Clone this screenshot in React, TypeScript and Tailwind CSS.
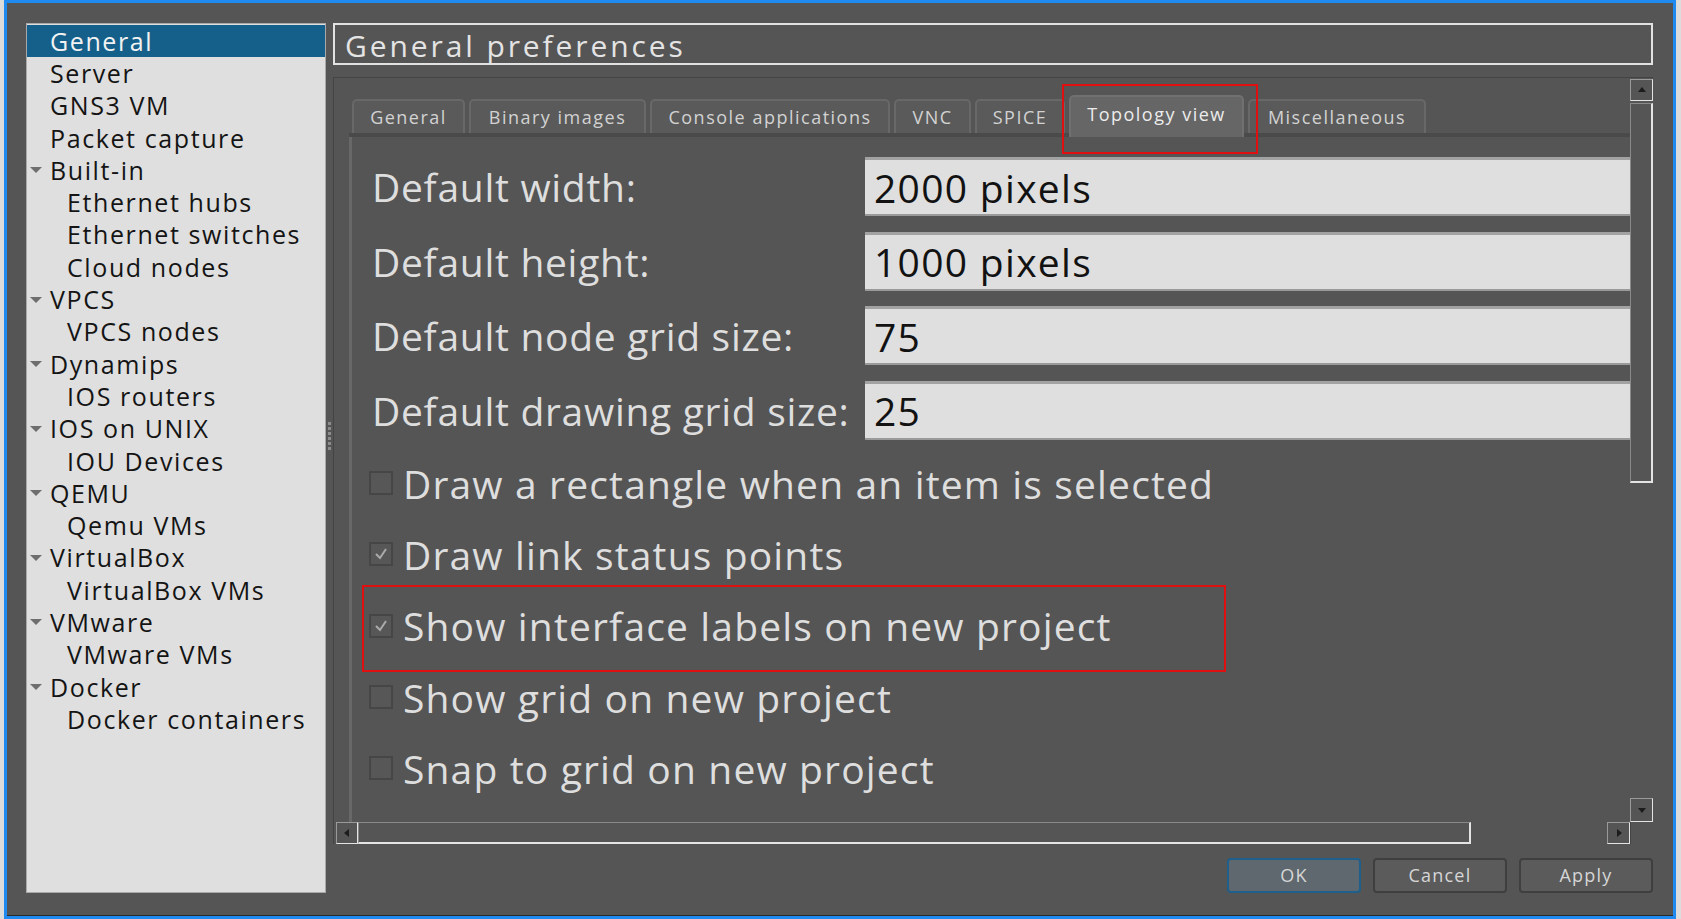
const tree = [
  { label: 'General', level: 0, selected: true },
  { label: 'Server', level: 0 },
  { label: 'GNS3 VM', level: 0 },
  { label: 'Packet capture', level: 0 },
  { label: 'Built-in', level: 0, open: true },
  { label: 'Ethernet hubs', level: 1 },
  { label: 'Ethernet switches', level: 1 },
  { label: 'Cloud nodes', level: 1 },
  { label: 'VPCS', level: 0, open: true },
  { label: 'VPCS nodes', level: 1 },
  { label: 'Dynamips', level: 0, open: true },
  { label: 'IOS routers', level: 1 },
  { label: 'IOS on UNIX', level: 0, open: true },
  { label: 'IOU Devices', level: 1 },
  { label: 'QEMU', level: 0, open: true },
  { label: 'Qemu VMs', level: 1 },
  { label: 'VirtualBox', level: 0, open: true },
  { label: 'VirtualBox VMs', level: 1 },
  { label: 'VMware', level: 0, open: true },
  { label: 'VMware VMs', level: 1 },
  { label: 'Docker', level: 0, open: true },
  { label: 'Docker containers', level: 1 },
]

const tabs = [
  { label: 'General', w: 'w-[113px]' },
  { label: 'Binary images', w: 'w-[177px]' },
  { label: 'Console applications', w: 'w-[240px]' },
  { label: 'VNC', w: 'w-[77px]' },
  { label: 'SPICE', w: 'w-[90px]' },
  { label: 'Topology view', w: 'w-[175px]', active: true },
  { label: 'Miscellaneous', w: 'w-[178px]' },
]

const fields = [
  { label: 'Default width:', value: '2000 pixels' },
  { label: 'Default height:', value: '1000 pixels' },
  { label: 'Default node grid size:', value: '75' },
  { label: 'Default drawing grid size:', value: '25' },
]

const checks = [
  { label: 'Draw a rectangle when an item is selected', on: false },
  { label: 'Draw link status points', on: true },
  { label: 'Show interface labels on new project', on: true },
  { label: 'Show grid on new project', on: false },
  { label: 'Snap to grid on new project', on: false },
]

function Tri({ dir }: { dir: 'up' | 'down' | 'left' | 'right' }) {
  const pts = {
    up: '1,7 9,7 5,2',
    down: '1,3 9,3 5,8',
    left: '7,1 7,9 2,5',
    right: '3,1 3,9 8,5',
  }[dir]
  return (
    <svg width="10" height="10" viewBox="0 0 10 10">
      <polygon points={pts} fill="#1c1c1c" />
    </svg>
  )
}

function Sidebar() {
  return (
    <div className="w-[300px] shrink-0 border border-[#a9a9a9] bg-[#dfdfdf] pt-px">
      {tree.map((t) => (
        <div
          key={t.label}
          className={`flex h-[32.3px] items-center ${t.selected ? 'bg-[#15608b] text-[#f2f2f2]' : 'text-[#141414]'}`}
        >
          <span className="flex w-[23px] shrink-0 pl-[2px]">
            {t.open && (
              <svg width="14" height="8" viewBox="0 0 14 8">
                <polygon points="1,1 13,1 7,7" fill="#6e6e6e" />
              </svg>
            )}
          </span>
          <span className={`text-[25px] leading-none tracking-[1.6px] ${t.level === 1 ? 'pl-[17px]' : ''}`}>
            {t.label}
          </span>
        </div>
      ))}
    </div>
  )
}

function Check({ on }: { on: boolean }) {
  return (
    <span className="flex h-[24px] w-[24px] shrink-0 items-center justify-center border-2 border-[#464646] bg-[#575757]">
      {on && (
        <svg width="16" height="16" viewBox="0 0 16 16">
          <polyline points="3,8 7,12 13,3" fill="none" stroke="#ababab" strokeWidth="2" />
        </svg>
      )}
    </span>
  )
}

function TopologyPane() {
  return (
    <div className="flex h-full flex-col">
      <div className="ml-[15px] mt-[17px] flex h-[42px] shrink-0 items-end gap-[4px] border-b-4 border-[#4a4a4a] pl-[3px]">
        {tabs.map((t) => (
          <div
            key={t.label}
            className={`flex shrink-0 items-center justify-center rounded-t-[5px] border-2 border-b-0 text-[18px] tracking-[1.5px] ${t.w} ${
              t.active
                ? 'relative z-10 -mb-[4px] h-[42px] border-[#707070] bg-[#666666] pb-[6px] text-[#ececec]'
                : 'h-[34px] border-[#686868] bg-[#5a5a5a] text-[#d2d2d2]'
            }`}
          >
            {t.label}
          </div>
        ))}
      </div>
      <div className="ml-[15px] flex-1 border-l-[3px] border-[#686868] pt-[20px]">
        <div className="flex flex-col gap-[15.5px]">
          {fields.map((f) => (
            <div key={f.label} className="flex h-[59px] items-center">
              <span className="w-[513px] shrink-0 pl-[20px] text-[39px] leading-none tracking-[0.7px] text-[#dedede]">
                {f.label}
              </span>
              <div className="flex h-[59px] flex-1 items-center border-t-[3px] border-b-2 border-t-[#a2a2a2] border-b-[#9a9a9a] bg-[#dfdfdf] pl-[9px] text-[39px] leading-none tracking-[1.3px] text-[#121212]">
                {f.value}
              </div>
            </div>
          ))}
        </div>
        <div className="mt-[8px] flex flex-col">
          {checks.map((c) => (
            <div key={c.label} className="flex h-[71.3px] items-center gap-[10px] pl-[17px]">
              <Check on={c.on} />
              <span className="whitespace-nowrap text-[39px] leading-none tracking-[1.15px] text-[#dedede]">
                {c.label}
              </span>
            </div>
          ))}
        </div>
      </div>
    </div>
  )
}

export default function App() {
  return (
    <div
      className="h-[919px] w-[1681px] overflow-hidden bg-[#dcdcdc]"
      style={{ fontFamily: '"Open Sans", "Noto Sans", sans-serif' }}
    >
      <div className="relative ml-[4px] h-[919px] w-[1672px] border-[3px] border-[#1f8bf0] bg-[#555555]">
        <div className="flex h-full border-b border-[#2a2a2a] pl-[19px] pt-[20px]">
          <div className="flex h-[870px]">
            <Sidebar />
            <div className="flex w-[7px] flex-col items-center justify-center gap-[2px] pb-[44px]">
              {[0, 1, 2, 3, 4, 5].map((i) => (
                <span key={i} className="h-[3px] w-[3px] bg-[#8c8c8c]" />
              ))}
            </div>
          </div>
          <div className="flex w-[1320px] flex-col">
            <div className="flex h-[42px] items-center border-2 border-[#e2e2e2] pl-[10px] pt-[3px] text-[30px] leading-none tracking-[2.9px] text-[#e4e4e4]">
              General preferences
            </div>
            <div className="mt-[12px] grid h-[767px] grid-cols-[1fr_23px] grid-rows-[1fr_22px] border-l border-t border-[#444444]">
              <div className="overflow-hidden">
                <TopologyPane />
              </div>
              <div className="flex flex-col pt-px">
                <div className="flex h-[22px] items-center justify-center border border-[#9a9a9a] border-r-[#e4e4e4] border-b-[#e4e4e4]">
                  <Tri dir="up" />
                </div>
                <div className="mt-[2px] h-[380px] border border-[#8a8a8a] border-r-2 border-b-2 border-r-[#e4e4e4] border-b-[#e4e4e4]" />
                <div className="flex-1" />
                <div className="flex h-[24px] items-center justify-center border border-[#9a9a9a] border-r-[#e4e4e4] border-b-[#e4e4e4]">
                  <Tri dir="down" />
                </div>
              </div>
              <div className="flex pl-[2px]">
                <div className="flex w-[22px] items-center justify-center border border-[#9a9a9a] border-r-[#e4e4e4] border-b-[#e4e4e4]">
                  <Tri dir="left" />
                </div>
                <div className="w-[1113px] border border-[#8a8a8a] border-r-2 border-b-2 border-r-[#e4e4e4] border-b-[#e4e4e4]" />
                <div className="flex-1" />
                <div className="flex w-[23px] items-center justify-center border border-[#9a9a9a] border-r-[#e4e4e4] border-b-[#e4e4e4]">
                  <Tri dir="right" />
                </div>
              </div>
              <div className="border-l border-[#444444]" />
            </div>
            <div className="mt-[14px] flex justify-end gap-[12px]">
              <button className="h-[35px] w-[134px] rounded-[4px] border-2 border-[#1e5f8c] bg-[#5e686e] text-[18px] tracking-[1.2px] text-[#d6d6d6]">
                OK
              </button>
              <button className="h-[35px] w-[134px] rounded-[4px] border-2 border-[#3f3f3f] bg-[#5b5b5b] text-[18px] tracking-[1.2px] text-[#d6d6d6]">
                Cancel
              </button>
              <button className="h-[35px] w-[134px] rounded-[4px] border-2 border-[#3f3f3f] bg-[#5b5b5b] text-[18px] tracking-[1.2px] text-[#d6d6d6]">
                Apply
              </button>
            </div>
          </div>
        </div>
        <div className="pointer-events-none absolute left-[1055px] top-[81px] h-[70px] w-[196px] border-2 border-[#e01010]" />
        <div className="pointer-events-none absolute left-[355px] top-[582px] h-[87px] w-[864px] border-2 border-[#e01010]" />
      </div>
    </div>
  )
}
